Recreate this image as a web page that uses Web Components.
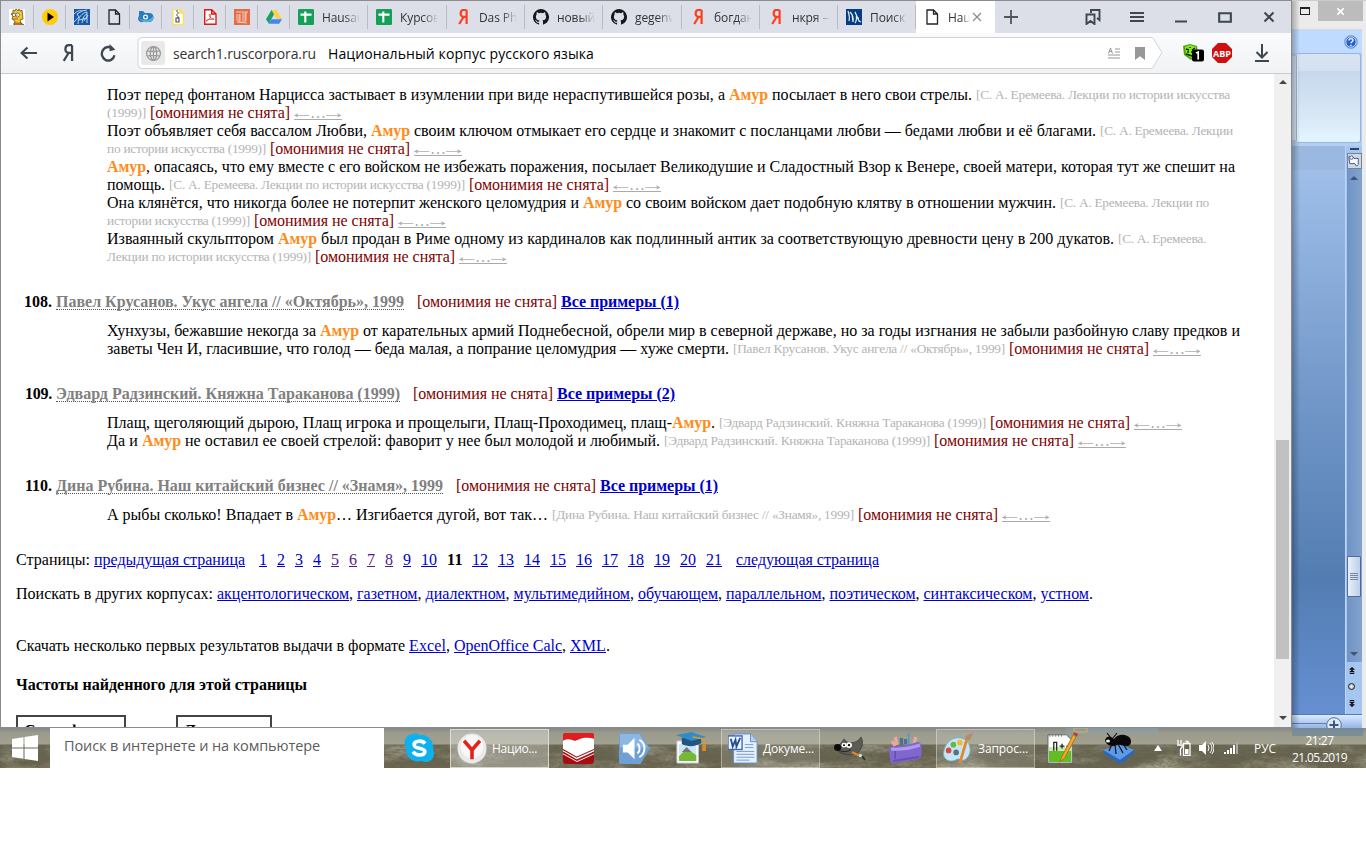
<!DOCTYPE html>
<html lang="ru"><head><meta charset="utf-8"><title>Национальный корпус русского языка</title>
<style>html,body{margin:0;background:#fff;overflow:hidden;font-family:"Open Sans","Noto Sans",sans-serif}</style></head>
<body><desk-top></desk-top>
<script>
const S=(vb,b)=>`<svg viewBox="0 0 ${vb}" width="100%" height="100%" preserveAspectRatio="none">${b}</svg>`;
const YA='<path d="M11.6 1v14M11.6 1H8.5C5 1 4.5 7.8 8.4 7.8h3.2M8.5 8 4.2 15"';
const MARK='<path d="M3 1h6.500l4 4v10H3zM9.500 1v4h4"';
const ICONS={
bart:S('16 16','<path fill="#fff" d="M0 0h16v16H0z"/><path d="M4 4l0-3 2 1 1-2 2 2 1-2 1 2 2-1 1 9-3 1 1 3 3 2H5l1-4-3-2 1-3-2-2z" fill="#f8c828" stroke="#4c3b16" stroke-width=".7"/><circle cx="5" cy="6" r="1.700" fill="#fff" stroke="#333" stroke-width=".6"/><circle cx="8.500" cy="6" r="2" fill="#fff" stroke="#333" stroke-width=".6"/><circle cx="8" cy="6" r=".5"/><path d="M4 10h5M5 14h7v2H5z" fill="#eb8044" stroke="#6e491f" stroke-width=".7"/>'),
play:S('16 16','<circle cx="8" cy="8" r="8" fill="#ffcc05"/><path d="M5.500 3.500v9L12 8z"/>'),
blue:S('16 16','<path fill="#1559a8" d="M0 0h16v16H0z"/><path d="M0 13 5 8 3 5 8 2l5-1M4 15c0-7 4-11 9-12M8 14c1-5 2-8 5-9M10 12l4-6M5 11l8-2M13 3v11M0 5c3-3 6-4 8-3" fill="none" stroke="#cfe3f6" stroke-width=".9"/>'),
doc:S('16 16',MARK+' fill="none" stroke="#1f2328" stroke-width="1.300"/>'),
fish:S('16 16','<path d="M1 2h4l2 2h4c7 0 5 10 0 9H5C0 14-1 9 1 7z" fill="#297dba"/><path d="M1 9c2 3 5 5 9 4 5 0 6-3 5-6-2 4-8 6-14 2z" fill="#56aee1"/><circle cx="7.500" cy="8" r="2.500" fill="#fff"/><circle cx="7.500" cy="8" r="1.200" fill="#1b69a5"/>'),
zip:S('16 16','<path d="M3 .7h7l3.300 3.300v11.300H3zM10 .7V4h3" fill="#fff" stroke="#ffe14e" stroke-width="1.300"/><path d="M6 2h2M7 4h2M6 6h2M7 8h2M6 9h3v4H6z" fill="none" stroke="#555" stroke-width="1.200"/>'),
pdf:S('16 16','<path d="M2.700.7h7L14 5v10.300H2.700zM9.700.7V5H14" fill="#fff" stroke="#dc1919" stroke-width="1.400"/><path d="M4 12c5-2 5-5 4-7-2 0 0 5 4 5 1 1-5-1-8 2z" fill="none" stroke="#e33" stroke-width=".9"/>'),
col:S('16 16','<path fill="#e36b45" d="M0 0h16v16H0z"/><path d="M2 3h12M3 5v7M6 5v9M9 4v9M12 3v9M5 5v8M11 4v9M3 13l10 1" stroke="#fbd9ce" stroke-width=".9"/>'),
drive:S('16 16','<path d="m5.500 1 5 0L5.300 10.200 2.800 14.500 0 10.200z" fill="#17a261"/><path d="M5.500 1h5L16 10.200h-5.200z" fill="#ffd048"/><path d="M5.400 10.200H16l-2.800 4.600H2.600z" fill="#4285f4"/>'),
sheet:S('16 16','<rect width="16" height="16" rx="1.200" fill="#15a05a"/><path d="M2.500 5.600h11M7.300 2.600v11" stroke="#fff" stroke-width="2.100"/>'),
ya:S('16 16',YA+' fill="none" stroke="#fc3f1d" stroke-width="2.200"/>'),
git:S('16 16','<path d="M8 0a8 8 0 0 0-2.530 15.590c.4.070.55-.17.55-.38v-1.500c-2.230.480-2.700-.94-2.700-.94-.36-.93-.89-1.170-.89-1.170-.73-.5.050-.49.050-.49.8.060 1.230.83 1.230.83.720 1.220 1.870.870 2.330.660.070-.52.280-.87.500-1.070-1.780-.2-3.640-.89-3.640-3.950 0-.87.310-1.590.82-2.150-.08-.2-.36-1.020.08-2.120 0 0 .67-.21 2.200.820a7.600 7.600 0 0 1 4 0c1.530-1.040 2.200-.82 2.200-.82.440 1.100.160 1.920.080 2.120.510.560.820 1.270.820 2.150 0 3.070-1.870 3.750-3.650 3.950.290.250.540.730.540 1.480v2.200c0 .210.150.460.550.380A8 8 0 0 0 8 0z" fill="#15181c"/>'),
corp:S('16 16','<path fill="#063d82" d="M0 0h16v16H0z"/><path d="M2 2q2 6 1 10M4 3q4 4 3 10L6 5M9 14c2-2 2-8 0-11l4 9 2 1M10 9h3" stroke="#e7f1ff" stroke-width="1.200" fill="none"/>'),
x:S('10 10','<path d="m1 1 8 8M9 1 1 9" stroke="#8a8c90" stroke-width="1.200"/>'),
plus:S('16 16','<path d="M8 1v14M1 8h14" stroke="#50565d" stroke-width="1.800"/>'),
marks:S('16 16','<path d="M6 4V1h8.500v10L12 9M1.500 5.500h8V15l-4-3-4 3z" fill="none" stroke="#3e464e" stroke-width="1.900"/>'),
menu:S('16 12','<path d="M1 2h14M1 6h14M1 10h14" stroke="#3e464e" stroke-width="1.900"/>'),
min:S('12 12','<path d="M0 10.500h12" stroke="#3e464e" stroke-width="2"/>'),
max:S('12 12','<path d="M1 2h10v8H1z" fill="none" stroke="#3e464e" stroke-width="1.800"/>'),
close:S('12 12','<path d="m1.500 1.500 9 9m0-9-9 9" stroke="#3e464e" stroke-width="2"/>'),
back:S('16 16','<path d="M16 8H1.500M7 2.500 1.500 8 7 13.500" fill="none" stroke="#3e4850" stroke-width="2"/>'),
yad:S('16 16',YA+' fill="none" stroke="#3e4850" stroke-width="2"/>'),
reload:S('16 16','<path d="M13.600 10a6 6 0 1 1-1.600-5.500" fill="none" stroke="#3e4850" stroke-width="2.200"/><path d="M9 0v6.500L14.500 5z" fill="#3e4850"/>'),
globe:S('16 16','<circle cx="8" cy="8" r="6.500"/><ellipse cx="8" cy="8" rx="3" ry="6.500"/><path d="M2 5.500c4 1 8 1 12 0M2 10.500c4-1 8-1 12 0M8 1.500v13"/>').replace('<svg','<svg fill="none" stroke="#9a9a9a" stroke-width="1.200"'),
reader:S('12 13','<path d="M7 2h5M7 5h5M0 8h12M0 11h12" stroke="#969696"/><path d="M.5 6.500 2.500 1l2 5.500M1.300 4.500h2.500" fill="none" stroke="#969696"/>'),
flag:S('10 13','<path d="M0 0h10v13L5 9.300 0 13z" fill="#989898"/>'),
adg:S('22 20','<path d="m1 3 7-2 7 2 1 7-7 7-7-5z" fill="#4ca312"/><path d="m3 4 5-2 6 2v6l-5 5-5-4z" fill="#8be81c"/><path d="m4 6 3 1M13 5l-3 2M4 11l6 2M5 9h2M9 9h3M8 4v1" stroke="#0d2a04" stroke-width="1.500"/><rect x="10" y="6.500" width="12" height="12" rx="2"/><path d="m14 10 2.200-1v7.500" fill="none" stroke="#fff" stroke-width="1.700"/>'),
abp:S('20 20','<path d="M6 0h8l6 6v8l-6 6H6l-6-6V6z" fill="#d0100f"/>'),
dl:S('14 18','<path d="M7 0v13M1.500 8 7 13.500 12.500 8M0 17h14" fill="none" stroke="#3e464e" stroke-width="2"/>'),
help:S('14 14','<circle cx="7" cy="7" r="6.400" fill="#2361cf" stroke="#88a8dc"/><circle cx="7" cy="7" r="5.200" fill="none" stroke="#fff" stroke-width=".8"/><path d="M5 5.500C5 3 9 3 9 5.300c0 1.500-2 1.500-2 3M7 9.700v1.300" fill="none" stroke="#fff" stroke-width="1.400"/>'),
win:S('26 26','<path fill="#fff" d="M0 4 11.500 2.200v10.200H0zM12.500 2 26 0v12.400H12.500zM0 13.500h11.500v10.200L0 22zM12.500 13.500H26V26l-13.500-2z"/>'),
skype:S('32 32','<path d="M9 1c3-1 6 0 7 1 10-1 15 8 14 15 4 8-4 16-12 12C8 31 1 24 2 15-2 8 3 1 9 1z" fill="#0fb1ec"/><path d="M21.500 11C19 7 10 8 10.500 12.500c.5 4.500 11.500 2 11 7-.5 4.500-10 4-12-.5" fill="none" stroke="#fff" stroke-width="3.800"/>'),
yb:S('32 32','<circle cx="16" cy="16" r="15.500" fill="#e9e9ea"/><circle cx="16" cy="14" r="12" fill="#f7f7f7"/><path d="M7.500 8 16 17.500 24.500 8M16 17v10" fill="none" stroke="#e2231d" stroke-width="3.800"/>'),
book:S('32 32','<rect width="32" height="32" rx="3" fill="#a80d10"/><path d="M0 3Q0 0 3 0h26q3 0 3 3v4H0z" fill="#e21d1f"/><path d="M0 8c5-3 9-1 12 0 5-1 9-5 20-2v13l-17 9L0 19z" fill="#fff"/><path d="m0 17 14 8 18-8M0 20l14 8 18-8M0 23l15 8 17-8" fill="none" stroke="#a31316" stroke-width="1.200"/><path d="m0 21.500 14.500 8L32 21.500" fill="none" stroke="#fff"/>'),
snd:S('32 32','<path d="M2 0h20l10 16-10 16H2q-2 0-2-2V2q0-2 2-2z" fill="#6fa0d5"/><path d="M1 1h20l9 14H1z" fill="#8bb7e2"/><path d="M4 12h5l7-7v22l-7-7H4z" fill="#fff"/><path d="M19 11c3 2 3 8 0 10M21 7c7 4 7 14 0 18" fill="none" stroke="#fff" stroke-width="2"/>'),
grad:S('32 32','<path d="M1 9h22v22H1z" fill="#fff" stroke="#ccd"/><path d="M3 12h18v10H3z" fill="#cce6f5"/><path d="m3 24 8-7 10 6v6H3z" fill="#75b837"/><path d="m6 20 5-5 5 5z" fill="#777"/><path d="M6 6v6c6 3 14 3 20-1V5z" fill="#205681"/><path d="m0 3 16-3 15 5-15 4z" fill="#318cc8"/><path d="m17 5 12 2v10" fill="none" stroke="#d99b2c" stroke-width="1.500"/><path d="M27 13h4v6h-4z" fill="#d88a22"/>'),
word:S('32 32','<path d="M6 1h18l7 8v22H6z" fill="#e7f1fd" stroke="#658dcb"/><path d="M24 1v8h7" fill="#b8d2f4" stroke="#658dcb"/><path d="M9 19h19M9 22h19M9 25h19M9 28h14M18 12h9M18 15h9" stroke="#7199cf"/><rect y="3" width="15" height="14" fill="#f5f9ff" stroke="#3f6bb6" stroke-width="1.500"/><path d="m3 6 2 8 3-7 1 7 4-9" fill="none" stroke="#264f9b" stroke-width="2"/>'),
gimp:S('32 26','<path d="M27 1c3 5 1 13-3 16-5 4-13 3-18 0-3-2-5-4-4-6 4-1 6-5 8-8 2 3 4 4 7 4 4 0 8-2 10-6z" fill="#5b5c58" stroke="#2b2c2a" stroke-width=".6"/><path d="M4 14c4 3 9 3 13 0" stroke="#222" fill="none"/><circle cx="3.500" cy="12" r="3.600" fill="#0c0c0c"/><circle cx="10" cy="9.500" r="2.500" fill="#fff"/><circle cx="15" cy="9.500" r="2.900" fill="#fff"/><circle cx="10" cy="9.500" r="1"/><circle cx="15" cy="9.500" r="1.200"/><path d="m18 17 7 3" stroke="#e38427" stroke-width="2.500"/><path d="m25 20 3 1" stroke="#dde1e5" stroke-width="3"/><path d="m28 21 3 4" stroke="#2b3440" stroke-width="2"/>'),
pencil:S('32 32','<path d="m6 14-3-5M8 13 6 5M24 13l2-8" stroke="#e6aa9d" stroke-width="3.200"/><path d="M12 13V6M16 12V7" stroke="#4f6f93" stroke-width="3.200"/><path d="M19 13V1" stroke="#4c9ac9" stroke-width="1.600"/><path d="M3 14Q15 15 27 10q4 0 4.500 4v9q0 3-3 4L6 31q-4 1-5-3L0 18q0-3 3-4z" fill="#7f67cf"/><path d="M2 17q15 1 28-4" stroke="#af9cf0" stroke-width="3" fill="none"/><path d="M4 29 29 25" stroke="#6650b3" stroke-width="2"/><path d="M6 19v8" stroke="#5e4aa8" stroke-width="1.200"/>'),
paint:S('32 32','<path d="M16 5c15 0 16 17 8 22-4 3-5-1-9 0C8 32-2 27 1 18 3 11 8 5 16 5z" fill="#c5e6f6" stroke="#7badc8"/><circle cx="6" cy="18" r="3" fill="#db493c"/><circle cx="11" cy="12" r="3" fill="#64b742"/><circle cx="18" cy="10" r="3" fill="#f1bd2e"/><circle cx="14" cy="20" r="3" fill="#567384"/><path d="m18 31 7-23" stroke="#e28932" stroke-width="3"/><path d="m24 8 0-5 8-3-3 7z" fill="#b98b60"/>'),
npp:S('32 34','<path d="M1 3h19l6 6v24H1z" fill="#fcfefb" stroke="#667"/><path d="M2 20h23v12H2z" fill="#62bd25"/><path d="M2 16h23v4H2z" fill="#c7e8a8"/><path d="M7 20v-9h3v9M13 15h5M15.500 12.500v5M20 15h5M22.500 12.500v5" fill="none" stroke="#202020" stroke-width="1.300"/><path d="M3 2v3m3-3v3m3-3v3m3-3v3m3-3v3" stroke="#777"/><path d="M15 27 27 3l3 2-12 23-5 4z" fill="#f2aa26" stroke="#a67422"/><path d="m27 2 1-2 4 2-1 3z" fill="#b83b40"/>'),
ant:S('32 32','<path d="m1 18 17-6 14 6-14 10z" fill="#5b9ae9"/><path d="m1 18 17 10v4L2 22zM18 28l14-10v3L19 32z" fill="#2d67bc"/><path d="M3 8c2-5 6-4 9-1 4-6 13-5 16-1 2 3 1 8-3 8-5 0-6-2-10-1-4 2-11 1-12-5z" fill="#090909"/><path d="m10 12-3 7m6-7 1 10m2-10 5 9m0-9 4 6M9 6 5 1m6 5 4-5" fill="none" stroke="#111" stroke-width="1.200"/><ellipse cx="6" cy="9" rx="2" ry="1.500" fill="#eee"/>'),
up:S('8 6','<path d="m4 0 4 6H0z" fill="#fff"/>'),
batt:S('15 16','<path d="M7.500 3.500h6.500v12H7.500zM9.500 1.500h2.500v2M2 0v4M5 0v4M1 5h5v2L4.500 9v6.500" fill="none" stroke="#fff" stroke-width="1.300"/><path d="M9 9h3.500v5H9z" fill="#fff"/>'),
vol:S('15 14','<path d="M0 4h3l4-4v14L3 10H0z" fill="#fff"/><path d="M9 4q2 3 0 6M11 2q4 5 0 10M13 1q4 6 0 12" fill="none" stroke="#fff"/>'),
sig:S('15 12','<path d="M1 12v-2M4 12V8M7 12V6M10 12V3" stroke="#fff" stroke-width="2"/><path d="M13 12V0" stroke="#a9aaa2" stroke-width="2"/>'),
browse:S('14 14','<path d="M1 2h4l2 2h5v7l-2 2-2-3H2z" fill="#f5f8fc" stroke="#334a73"/><circle cx="4" cy="3" r="2" fill="#fff" stroke="#334a73"/>'),
plusc:S('16 16','<circle cx="8" cy="8" r="7.300" fill="#dce9f8" stroke="#5a7196"/><path d="M8 3.500v9M3.500 8h9" stroke="#3b587e" stroke-width="2"/>')
};
const def=(n,html,after)=>customElements.define(n,class extends HTMLElement{connectedCallback(){if(this.shadowRoot)return;this.attachShadow({mode:'open'}).innerHTML=typeof html=='function'?html(this):html;after&&after(this)}});
def('ui-icon',e=>`<style>:host{display:block;flex:none;width:${e.getAttribute('w')||16}px;height:${e.getAttribute('h')||e.getAttribute('w')||16}px}svg{display:block}</style>${ICONS[e.getAttribute('name')]}`);
// A run of text whose letter-spacing is tuned so that it occupies a given width.
def('fit-run',`<style>:host{display:inline-block;white-space:pre;flex:none}span{display:inline-block;white-space:pre;text-decoration:inherit}</style><span><slot></slot></span>`,e=>{
 const w=+e.getAttribute('w');if(!w)return;const n=e.textContent.length;
 const s=e.shadowRoot.querySelector('span'),nat=s.getBoundingClientRect().width;
 s.style.letterSpacing=((w-nat)/n)+'px';e.style.width=w+'px';});
// Link to the wider context: two long arrows around an ellipsis.
def('context-link',`<style>:host{display:grid;grid-template-columns:16px 16px 16px;flex:none;margin-left:4px;color:#aaa;box-sizing:border-box;height:15.500px;line-height:17px;border-bottom:1px solid #aaa;text-align:center}span{transform:scaleX(1.600)}</style><span>←</span><i style="font-style:normal">…</i><span>→</span>`);
const ic=(n,w,h,m)=>`<ui-icon name="${n}" w="${w}" h="${h||w}" style="margin-left:${m||0}px"></ui-icon>`;
def('tab-item',e=>{const t=e.getAttribute('label'),on=e.hasAttribute('on');return `<style>:host{display:flex;align-items:center;box-sizing:border-box;flex:none;width:${e.getAttribute('w')}px;height:32px;position:relative;background:${on?'#fff':'transparent'};padding-left:${t?8:8}px;font-size:12px;color:#333}
i{position:absolute;right:0;top:4px;width:1px;height:24px;background:#b9bbc0}div{width:${on?22:38}px;overflow:hidden;white-space:nowrap;letter-spacing:-.1px;margin-left:${on?8:8}px;-webkit-mask:linear-gradient(90deg,#000 60%,transparent)}</style>${ic(e.getAttribute('icon'),16)}${t?`<div>${t}</div>`:''}${on?ic('x',10,10,2):'<i></i>'}`});
const tab=(i,w,l)=>`<tab-item icon="${i}" w="${w}" ${l?`label="${l}"`:''}></tab-item>`;
def('tab-strip',`<style>:host{display:flex;height:32px;background:#dddfe8;align-items:center}</style>`+
 tab('bart',33)+['play','blue','doc','fish','zip','pdf','col','drive'].map(i=>tab(i,32)).join('')+
 tab('sheet',78,'Hausau')+tab('sheet',79,'Курсов')+tab('ya',78,'Das Pha')+tab('git',78,'новый')+tab('git',79,'gegenw')+tab('ya',78,'богдан')+tab('ya',78,'нкря —')+tab('corp',78,'Поиск')+
 `<tab-item icon="doc" w="79" label="Нац" on></tab-item>`+ic('plus',16,16,8)+ic('marks',16,16,66)+ic('menu',16,12,28)+ic('min',12,12,30)+ic('max',14,13,31)+ic('close',12,12,31));
def('address-bar',`<style>:host{display:flex;height:40px;background:linear-gradient(#fafbfc,#f2f3f5);align-items:center;border-bottom:1px solid #c9cacd;font-size:14px;color:#333}
.box{margin-left:20px;position:relative;width:1026px;height:32px;display:flex;align-items:center;flex:none}.box>svg{position:absolute;inset:0}.box>*{z-index:1}.box>svg{z-index:0}.g{width:24px;height:24px;background:#e9e9e9;border-radius:3px;margin-left:4px;display:grid;place-items:center}
.b{color:#000}.abp{display:grid;place-items:center;margin-left:8px}.abp>*{grid-area:1/1}.abp b{font-size:9px;color:#fff}.sp{flex:1}</style>
${ic('back',17,16,19)}${ic('yad',18,18,22)}${ic('reload',17,18,23)}<div class="box"><svg width="1026" height="32"><path d="M5 .5H1014q2 0 3 2l8 13-8 13q-1 3-3 3H5q-4 0-4-4V4.500Q1 .5 5 .5z" fill="#fff" stroke="#d2d3d5"/></svg><span class="g">${ic('globe',17)}</span><fit-run w="143" style="margin-left:8px">search1.ruscorpora.ru</fit-run><fit-run class="b" w="266" style="margin-left:12px">Национальный корпус русского языка</fit-run><span class="sp"></span>${ic('reader',12,13)}${ic('flag',10,13,15)}<span style="width:18px"></span></div>
${ic('adg',22,20,19)}<span class="abp">${ic('abp',20)}<b>ABP</b></span>${ic('dl',14,18,23)}`);
const T=(t,w)=>`<fit-run w="${w}">${t}</fit-run>`,A=`<fit-run class="a" w="39">Амур</fit-run>`,C=(t,w)=>`<fit-run class="c" w="${w}">${t}</fit-run>`,
 H=(m=4)=>`<fit-run class="h" w="140" style="margin-left:${m}px">[омонимия не снята]</fit-run>`,R=`<context-link></context-link>`,
 L=(t,w)=>`<fit-run class="l" w="${w}">${t}</fit-run>`,row=h=>`<div>${h}</div>`;
def('corpus-entry',e=>`<style>:host{display:block;margin-bottom:27px}.hd{display:flex;height:18px;line-height:18px;margin-bottom:11px;font-weight:bold;padding-left:${e.getAttribute('no')=='108'?8:9}px}.t{color:gray;margin-left:4px;border-bottom:1px dotted #555;height:16px;line-height:18px}.h{color:#800000;font-weight:400;margin:0 4px 0 13px}.l{color:#00c;text-decoration:underline}</style>
<div class="hd">${T(e.getAttribute('no')+'.',e.getAttribute('no')=='108'?28:27)}<fit-run class="t" w="${e.getAttribute('tw')}">${e.getAttribute('title')}</fit-run><fit-run class="h" w="140">[омонимия не снята]</fit-run>${L('Все примеры ('+e.getAttribute('n')+')',118)}</div><slot></slot>`);
def('example-lines',e=>`<style>:host{display:block;padding-left:91px}div{display:flex;height:18px;line-height:18px}.a{color:#ff8c1a;font-weight:bold}.c{color:#b4b4b4;font-size:13.330px}.h{color:#800000}</style>${EX[e.getAttribute('set')].map(row).join('')}`);
const EX={
a:[T('Поэт перед фонтаном Нарцисса застывает в изумлении при виде нераспутившейся розы, а ',622)+A+T(' посылает в него свои стрелы. ',208)+C('[С. А. Еремеева. Лекции по истории искусства',254),
C('(1999)]',39)+H()+R,
T('Поэт объявляет себя вассалом Любви, ',264)+A+T(' своим ключом отмыкает его сердце и знакомит с посланцами любви — бедами любви и её благами. ',690)+C('[С. А. Еремеева. Лекции',133),
C('по истории искусства (1999)]',159)+H()+R,
A+T(', опасаясь, что ему вместе с его войском не избежать поражения, посылает Великодушие и Сладостный Взор к Венере, своей матери, которая тут же спешит на',1089),
T('помощь. ',62)+C('[С. А. Еремеева. Лекции по истории искусства (1999)]',296)+H()+R,
T('Она клянётся, что никогда более не потерпит женского целомудрия и ',476)+A+T(' со своим войском дает подобную клятву в отношении мужчин. ',438)+C('[С. А. Еремеева. Лекции по',149),
C('истории искусства (1999)]',143)+H()+R,
T('Изваянный скульптором ',171)+A+T(' был продан в Риме одному из кардиналов как подлинный антик за соответствующую древности цену в 200 дукатов. ',801)+C('[С. А. Еремеева.',88),
C('Лекции по истории искусства (1999)]',204)+H()+R],
b:[T('Хунхузы, бежавшие некогда за ',213)+A+T(' от карательных армий Поднебесной, обрели мир в северной державе, но за годы изгнания не забыли разбойную славу предков и',881),
T('заветы Чен И, гласившие, что голод — беда малая, а попрание целомудрия — хуже смерти. ',626)+C('[Павел Крусанов. Укус ангела // «Октябрь», 1999]',272)+H()+R],
c:[T('Плащ, щеголяющий дырою, Плащ игрока и прощелыги, Плащ-Проходимец, плащ-',565)+A+T('. ',8)+C('[Эдвард Радзинский. Княжна Тараканова (1999)]',267)+H()+R,
T('Да и ',35)+A+T(' не оставил ее своей стрелой: фаворит у нее был молодой и любимый. ',483)+C('[Эдвард Радзинский. Княжна Тараканова (1999)]',266)+H()+R],
d:[T('А рыбы сколько! Впадает в ',190)+A+T('… Изгибается дугой, вот так… ',216)+C('[Дина Рубина. Наш китайский бизнес // «Знамя», 1999]',302)+H()+R]};
// link rows: [text, width, left margin]
const links=a=>a.map(([t,w,m,k])=>`<fit-run class="${k||'l'}" w="${w}" style="margin-left:${m}px">${t}</fit-run>`).join('');
const pg=[];for(let i=1;i<=21;i++)pg.push([i,i<10?8:16,i==1?14:i==12?9:10,i==11?'b':i>4&&i<9?'v':'l']);
def('corpus-page',`<style>:host{display:block;flex:1;min-width:0;overflow:hidden;padding:12px 0 0 15px;font:16px/18px "Liberation Serif",serif;color:#000;position:relative}
:host::before{content:"";position:absolute;left:55px;top:-1px;width:378px;border-top:1px dotted #444}
.row{display:flex;height:18px}.l{color:#00c;text-decoration:underline}.v{color:#551a8b;text-decoration:underline}.b{font-weight:bold}.tb{display:flex;margin-top:21px;font-weight:bold;font-size:16px}.tb span{box-sizing:border-box;height:36px;border:2px solid #444;padding:5px 6px}.tb em{width:50px}</style>
<example-lines set="a" style="margin-bottom:27px"></example-lines>
<corpus-entry no="108" title="Павел Крусанов. Укус ангела // «Октябрь», 1999" tw="348" n="1"><example-lines set="b"></example-lines></corpus-entry>
<corpus-entry no="109" title="Эдвард Радзинский. Княжна Тараканова (1999)" tw="344" n="2"><example-lines set="c"></example-lines></corpus-entry>
<corpus-entry no="110" title="Дина Рубина. Наш китайский бизнес // «Знамя», 1999" tw="387" n="1"><example-lines set="d"></example-lines></corpus-entry>
<div class="row">${T('Страницы: ',78)}${links([['предыдущая страница',151,0],...pg,['следующая страница',143,14]])}</div>
<div class="row" style="margin-top:16px">${T('Поискать в других корпусах: ',201)}${[['акцентологическом',132],['газетном',60.5],['диалектном',80],['мультимедийном',116.5],['обучающем',80],['параллельном',95.5],['поэтическом',86],['синтаксическом',109],['устном',48.5]].map(([t,w],i)=>L(t,w)+T(i==8?'.':', ',i==8?4:8)).join('')}</div>
<div class="row" style="margin-top:34px">${T('Скачать несколько первых результатов выдачи в формате ',393)}${L('Excel',37)}${T(', ',8)}${L('OpenOffice Calc',108)}${T(', ',8)}${L('XML',36)}.</div>
<div class="row b" style="margin-top:21px">${T('Частоты найденного для этой страницы',291)}</div>
<div class="tb"><span style="width:110px">Словоформа</span><em></em><span style="width:96px">Лемма</span></div>`);
def('page-scroll',`<style>:host{display:flex;flex-direction:column;align-items:center;flex:none;width:17px;background:#f0f0f0}i{width:13px;height:219px;background:#c1c1c1}b{border:4px solid transparent;border-bottom-color:#444;border-top:0;margin:6px 0 356px}u{border:4px solid transparent;border-top-color:#444;border-bottom:0;margin-top:57px}</style><b></b><i></i><u></u>`);
def('browser-window',`<style>:host{display:flex;flex-direction:column;width:1292px;height:728px;box-sizing:border-box;border:1px solid #8b8b8f;background:#fff;flex:none;overflow:hidden}main{display:flex;flex:1;min-height:0}tab-strip,address-bar{flex:none}</style><tab-strip></tab-strip><address-bar></address-bar><main><corpus-page></corpus-page><page-scroll></page-scroll></main>`);
def('word-window',`<style>:host{display:flex;flex-direction:column;flex:1;height:728px;background:#ebebeb;box-sizing:border-box;border-top:1px solid #ccc;padding-right:4px;position:relative}
:host::before{content:"";position:absolute;z-index:3;left:0;top:0;bottom:0;width:8px;background:linear-gradient(90deg,#0004,#0000)}
.t{display:flex;height:28px;flex:none}.t i{height:5px;border:2px solid #222;border-width:2px 1px 1px;margin:6px 8px 0 8px;width:8px}.t b{flex:1;height:20px;background:#bcbcbc;display:grid;place-items:center;margin-right:-1px}
.r{height:24px;background:#bfdbff;display:flex;justify-content:flex-end;align-items:center;padding-right:4px;border-top:1px solid #d7d7dc;box-sizing:border-box;flex:none}
.p{height:93px;background:#b7cef0;flex:none;display:flex}.p u{width:4px;border-right:1px solid #9db9d9;background:linear-gradient(#cfdeee,#d8e7f5);height:84px;margin-top:3px}.p i{flex:1;height:88px;border:1px solid #8fb7e8;border-left-color:#edf5fd;border-radius:3px;margin-right:1px;background:linear-gradient(#d8e4f2 0,#d4e1f0 19%,#c7d8ed 20%,#d9e9f6 75%,#e3f6ff)}
.d{display:flex;flex:1;min-height:0}.doc{flex:1;background:linear-gradient(#9bb9e0 0,#9bb9e0 24px,#9fbfe9 24px,#7499ca 240px,#537db2 435px,#658fd0 565px)}
.s{width:16px;display:flex;flex-direction:column;align-items:center;background:#a6c6f2;border-left:1px solid #bdd6f8}.s>hr{width:9px;border:0;border-top:2px solid #334064;margin:2px 0 3px;flex:none}.br{width:15px;height:16px;flex:none;border:1px solid #778298;background:#ccd8e8;box-sizing:border-box;display:grid;place-items:center}
.tr{width:15px;height:493px;background:linear-gradient(90deg,#6f93c3,#83a3cf);flex:none;display:flex;flex-direction:column;align-items:center}.tr .u{border:4px solid transparent;border-top:0;border-bottom-color:#425174;margin:7px 0 376px}.tr .k{box-sizing:border-box;width:14px;height:41px;border:1px solid #53699b;background:repeating-linear-gradient(#7186a3 0 1px,#0000 1px 2px) center/8px 8px no-repeat,linear-gradient(90deg,#e8f0fa,#bad0ea);border-radius:1px}.tr .v{border:4px solid transparent;border-bottom:0;border-top-color:#425174;margin-top:55px}
.c{width:5px;height:5px;flex:none;border:1px solid #222;border-radius:50%;background:radial-gradient(#fff,#999);margin:9px 5px 0 0}.tri{width:6px;height:7px;flex:none;margin:5px 4px 0 0}
.f{height:14px;flex:none;background:linear-gradient(#dcebff,#93b5e8);border-top:1px solid #5479b6;box-sizing:border-box;display:flex;align-items:flex-start;overflow:hidden}.f hr{width:34px;margin:8px 0 0;border:0;border-top:1px solid #5f80af;flex:none}.f ui-icon{margin-top:2px}</style>
<div class="t"><i></i><b>${S('10 10','<path d="m1.500 1.500 7 7m0-7-7 7" stroke="#fff" stroke-width="1.800"/>').replace(/100%/g,'9')}</b></div><div class="r">${ic('help',14)}</div><div class="p"><u></u><i></i></div>
<div class="d"><div class="doc"></div><div class="s"><hr><span class="br">${ic('browse',12)}</span><div class="tr"><i class="u"></i><i class="k"></i><i class="v"></i></div>
<svg class="tri" viewBox="0 0 7 8"><path d="M3.500 0 7 3H0zM3.500 3 7 6H0zM1 7h5v1H1z"/></svg><i class="c"></i><svg class="tri" style="margin-top:10px" viewBox="0 0 7 8"><path d="M1 0h5v1H1zM0 2h7L3.500 5zM0 5h7L3.500 8z"/></svg></div></div><div class="f"><hr>${ic('plusc',16,16,0)}</div>`);
def('task-button',e=>`<style>:host{display:flex;flex:none;width:99px;height:39px;box-sizing:border-box;border:1px solid rgba(235,235,225,${e.hasAttribute('on')?.75:.45});background:rgba(255,255,255,${e.hasAttribute('on')?.3:.12});align-items:center;padding-left:6px;gap:5px;font-size:12px;color:#fff}</style>${ic(e.getAttribute('icon'),30,31)}<fit-run w="${e.getAttribute('tw')}">${e.getAttribute('label')}</fit-run>`);
def('task-bar',`<style>:host{display:flex;position:relative;height:40px;width:1366px;align-items:center;background:linear-gradient(#868a84 0,#9b9b8e 5px,#a2a18f 16px,#6b6856 17px,#666350 30px,#6b6753);color:#fff;overflow:hidden}
.n{position:absolute;left:0;top:0}:host>*:not(.n){z-index:1}.s{width:334px;height:40px;background:#fff;color:#5c5c5c;box-sizing:border-box;padding:8px 0 0 14px;margin-left:12px;font-size:14.500px}.clk{display:flex;flex-direction:column;align-items:center;font-size:12px;line-height:17px;margin:2px 0 0 16px}</style>
<svg class="n" width="1366" height="40"><defs><filter id="n" x="0" y="0" width="100%" height="100%"><feTurbulence type="fractalNoise" baseFrequency=".22 .42" numOctaves="3" seed="7"/><feColorMatrix values="0 0 0 0 .12  0 0 0 0 .11  0 0 0 0 .06  1.500 0 0 0 -.6"/></filter><filter id="m" x="0" y="0" width="100%" height="100%"><feTurbulence type="fractalNoise" baseFrequency=".02 .06" numOctaves="4" seed="3"/><feColorMatrix values="0 0 0 0 .65  0 0 0 0 .63  0 0 0 0 .5  0 1.600 0 0 -.7"/></filter></defs><g><rect y="17" width="1366" height="23" filter="url(#m)" opacity=".8"/><rect y="17" width="1366" height="23" filter="url(#n)"/><path d="M1292 0h71v8h-71z" fill="#71889a" opacity=".7"/><path d="M1066 0h92v6h-92z" fill="#8fa0a8" opacity=".6"/><path d="M1074 0h13v4h-13z" fill="none" stroke="#d4b05c"/></g></svg>
${ic('win',26,26,12)}<div class="s"><fit-run w="256">Поиск в интернете и на компьютере</fit-run></div>${ic('skype',31,31,20)}<task-button on icon="yb" label="Нацио..." tw="45" style="margin-left:15px"></task-button>${ic('book',31,31,14)}${ic('snd',31,31,25)}${ic('grad',31,32,26)}<task-button icon="word" label="Докуме..." tw="51" style="margin-left:14px"></task-button>${ic('gimp',32,25,14)}${ic('pencil',33,32,23)}<task-button icon="paint" label="Запрос..." tw="50" style="margin-left:14px"></task-button>${ic('npp',31,32,12)}${ic('ant',32,32,24)}${ic('up',8,6,20)}${ic('batt',15,16,14)}${ic('vol',15,14,8)}${ic('sig',15,12,10)}<fit-run w="22" style="margin-left:15px;font-size:12px">РУС</fit-run><div class="clk">${T('21:27',28)}${T('21.05.2019',55)}</div>`);
def('desk-top',`<style>:host{display:block;width:1366px;height:868px;background:#fff;overflow:hidden}div{display:flex}</style><div><browser-window></browser-window><word-window></word-window></div><task-bar></task-bar>`);
</script></body></html>
